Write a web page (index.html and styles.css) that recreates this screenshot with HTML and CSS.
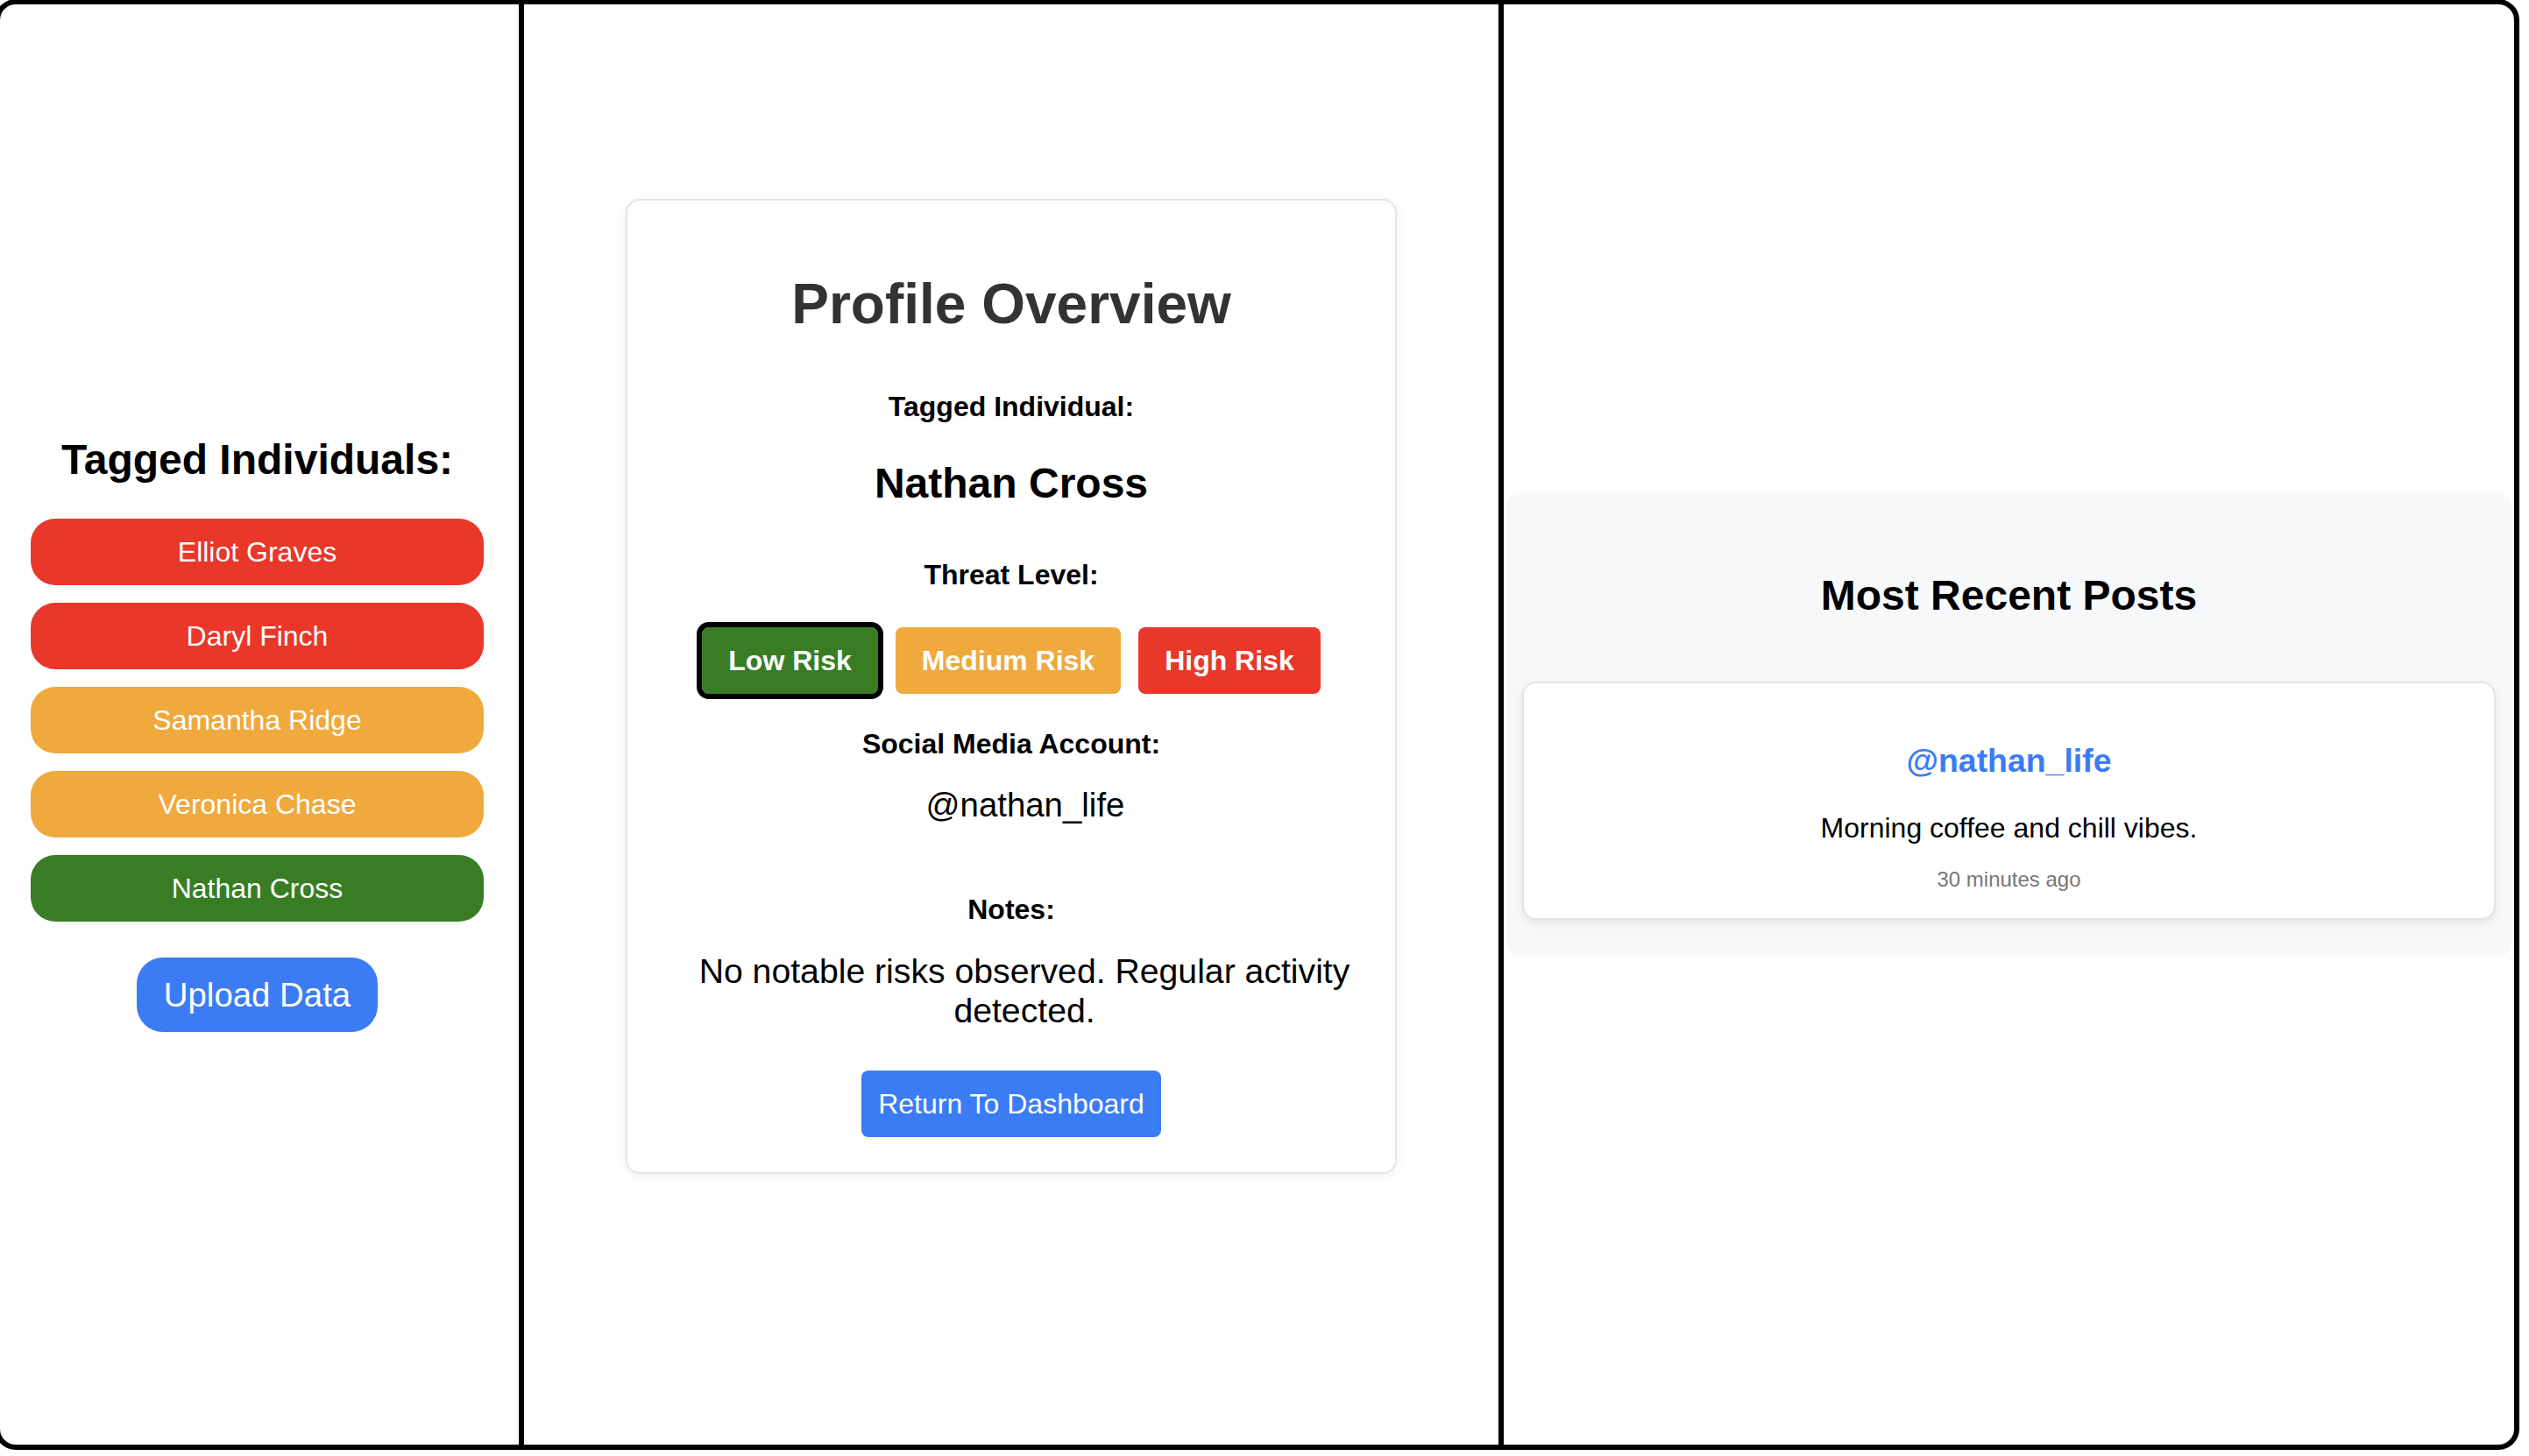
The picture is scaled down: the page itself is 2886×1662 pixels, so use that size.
FILE: index.html
```html
<!DOCTYPE html>
<html lang="en">
<head>
<meta charset="utf-8">
<title>Profile Overview</title>
<link rel="stylesheet" href="styles.css">
</head>
<body>
<div class="frame">
  <aside class="col col-left">
    <h2 class="side-title">Tagged Individuals:</h2>
    <ul class="people">
      <li class="person red">Elliot Graves</li>
      <li class="person red">Daryl Finch</li>
      <li class="person orange">Samantha Ridge</li>
      <li class="person orange">Veronica Chase</li>
      <li class="person green">Nathan Cross</li>
    </ul>
    <button class="upload">Upload Data</button>
  </aside>

  <main class="col col-mid">
    <section class="card">
      <h1 class="title">Profile Overview</h1>
      <p class="label first">Tagged Individual:</p>
      <h2 class="name">Nathan Cross</h2>
      <p class="label threat">Threat Level:</p>
      <div class="risks">
        <button class="risk green selected">Low Risk</button>
        <button class="risk orange">Medium Risk</button>
        <button class="risk red">High Risk</button>
      </div>
      <p class="label social">Social Media Account:</p>
      <p class="handle">@nathan_life</p>
      <p class="label notes-label">Notes:</p>
      <p class="notes">No notable risks observed. Regular activity detected.</p>
      <button class="return">Return To Dashboard</button>
    </section>
  </main>

  <section class="col col-right">
    <div class="posts">
      <h2 class="posts-title">Most Recent Posts</h2>
      <article class="post">
        <h3 class="post-user">@nathan_life</h3>
        <p class="post-text">Morning coffee and chill vibes.</p>
        <p class="post-time">30 minutes ago</p>
      </article>
    </div>
  </section>
</div>
</body>
</html>
```

FILE: styles.css
```css
html, body {
  margin: 0;
  padding: 0;
  background: #ffffff;
  overflow: hidden;
}

body {
  font-family: "Liberation Sans", Arial, sans-serif;
  color: #000;
}

.frame {
  box-sizing: border-box;
  width: 2881px;
  height: 1656px;
  margin: -1px 0 0 -6px;
  border: 6px solid #000;
  border-radius: 24px;
  display: flex;
  overflow: hidden;
}

.col {
  box-sizing: border-box;
  height: 100%;
}

/* Left column */
.col-left {
  width: 592px;
  flex: none;
  padding: 492px 40px 0 35px;
  text-align: center;
}

.side-title {
  margin: 0;
  font-size: 48px;
  line-height: 55px;
  font-weight: 700;
}

.people {
  list-style: none;
  margin: 40px 0 0;
  padding: 0;
  display: flex;
  flex-direction: column;
  gap: 20px;
}

.person {
  color: #fff;
  font-size: 32px;
  line-height: 36px;
  padding: 20px 10px;
  border-radius: 28px;
}

.red { background: #e9372a; }
.orange { background: #f0a93d; }
.green { background: #387d24; }

.upload {
  margin-top: 41px;
  font-family: inherit;
  font-size: 38.4px;
  line-height: 45px;
  padding: 20px 31px;
  border: none;
  border-radius: 30px;
  background: #3b7cf5;
  color: #fff;
}

/* Middle column */
.col-mid {
  width: 1124px;
  flex: none;
  border-left: 6px solid #000;
  border-right: 6px solid #000;
  padding-top: 222px;
}

.card {
  box-sizing: border-box;
  width: 880px;
  margin: 0 auto;
  background: #fff;
  border: 2px solid #e4e4e4;
  border-radius: 16px;
  padding: 40px;
  box-shadow: 0 2px 14px rgba(0, 0, 0, 0.07);
  text-align: center;
}

.title {
  margin: 41px 0 0;
  font-size: 64px;
  line-height: 74px;
  font-weight: 700;
  color: #333;
}

.label {
  margin: 0;
  font-size: 32px;
  line-height: 37px;
  font-weight: 700;
}

.label.first { margin-top: 62px; }
.label.threat { margin-top: 59px; }
.label.social { margin-top: 39px; }
.label.notes-label { margin-top: 79px; }

.name {
  margin: 41px 0 0;
  font-size: 48px;
  line-height: 55px;
  font-weight: 700;
}

.risks {
  margin-top: 41px;
  display: flex;
  justify-content: center;
}

.risk {
  margin: 0 10px;
  font-family: inherit;
  font-size: 32px;
  line-height: 36px;
  font-weight: 700;
  padding: 20px 30px;
  border: none;
  border-radius: 8px;
  color: #fff;
}

.risk.selected {
  outline: 6px solid #000;
}

.handle {
  margin: 29px 0 0;
  padding-left: 32px;
  font-size: 38.4px;
  line-height: 44px;
}

.notes {
  margin: 30px 0 0;
  padding-left: 30px;
  font-size: 39.2px;
  line-height: 44.5px;
}

.return {
  margin-top: 46px;
  font-family: inherit;
  font-size: 32px;
  line-height: 36px;
  padding: 20px 19px;
  border: none;
  border-radius: 8px;
  background: #3b7cf5;
  color: #fff;
}

/* Right column */
.col-right {
  flex: 1;
  padding: 557px 3px 0;
}

.posts {
  background: #f7f8fa;
  border-radius: 16px;
  padding: 0 18px 42px;
  text-align: center;
  overflow: hidden;
}

.posts-title {
  margin: 90px 0 0;
  font-size: 48px;
  line-height: 55px;
  font-weight: 700;
}

.post {
  margin-top: 71px;
  background: #fff;
  border: 2px solid #e4e4e4;
  border-radius: 16px;
  padding: 30px;
  box-shadow: 0 4px 10px rgba(0, 0, 0, 0.08);
}

.post-user {
  margin: 37px 0 0;
  font-size: 37.44px;
  line-height: 43px;
  font-weight: 700;
  color: #3b7cf5;
}

.post-text {
  margin: 37px 0 0;
  font-size: 32px;
  line-height: 37px;
}

.post-time {
  margin: 26px 0 0;
  font-size: 24px;
  line-height: 28px;
  color: #777;
}
```
